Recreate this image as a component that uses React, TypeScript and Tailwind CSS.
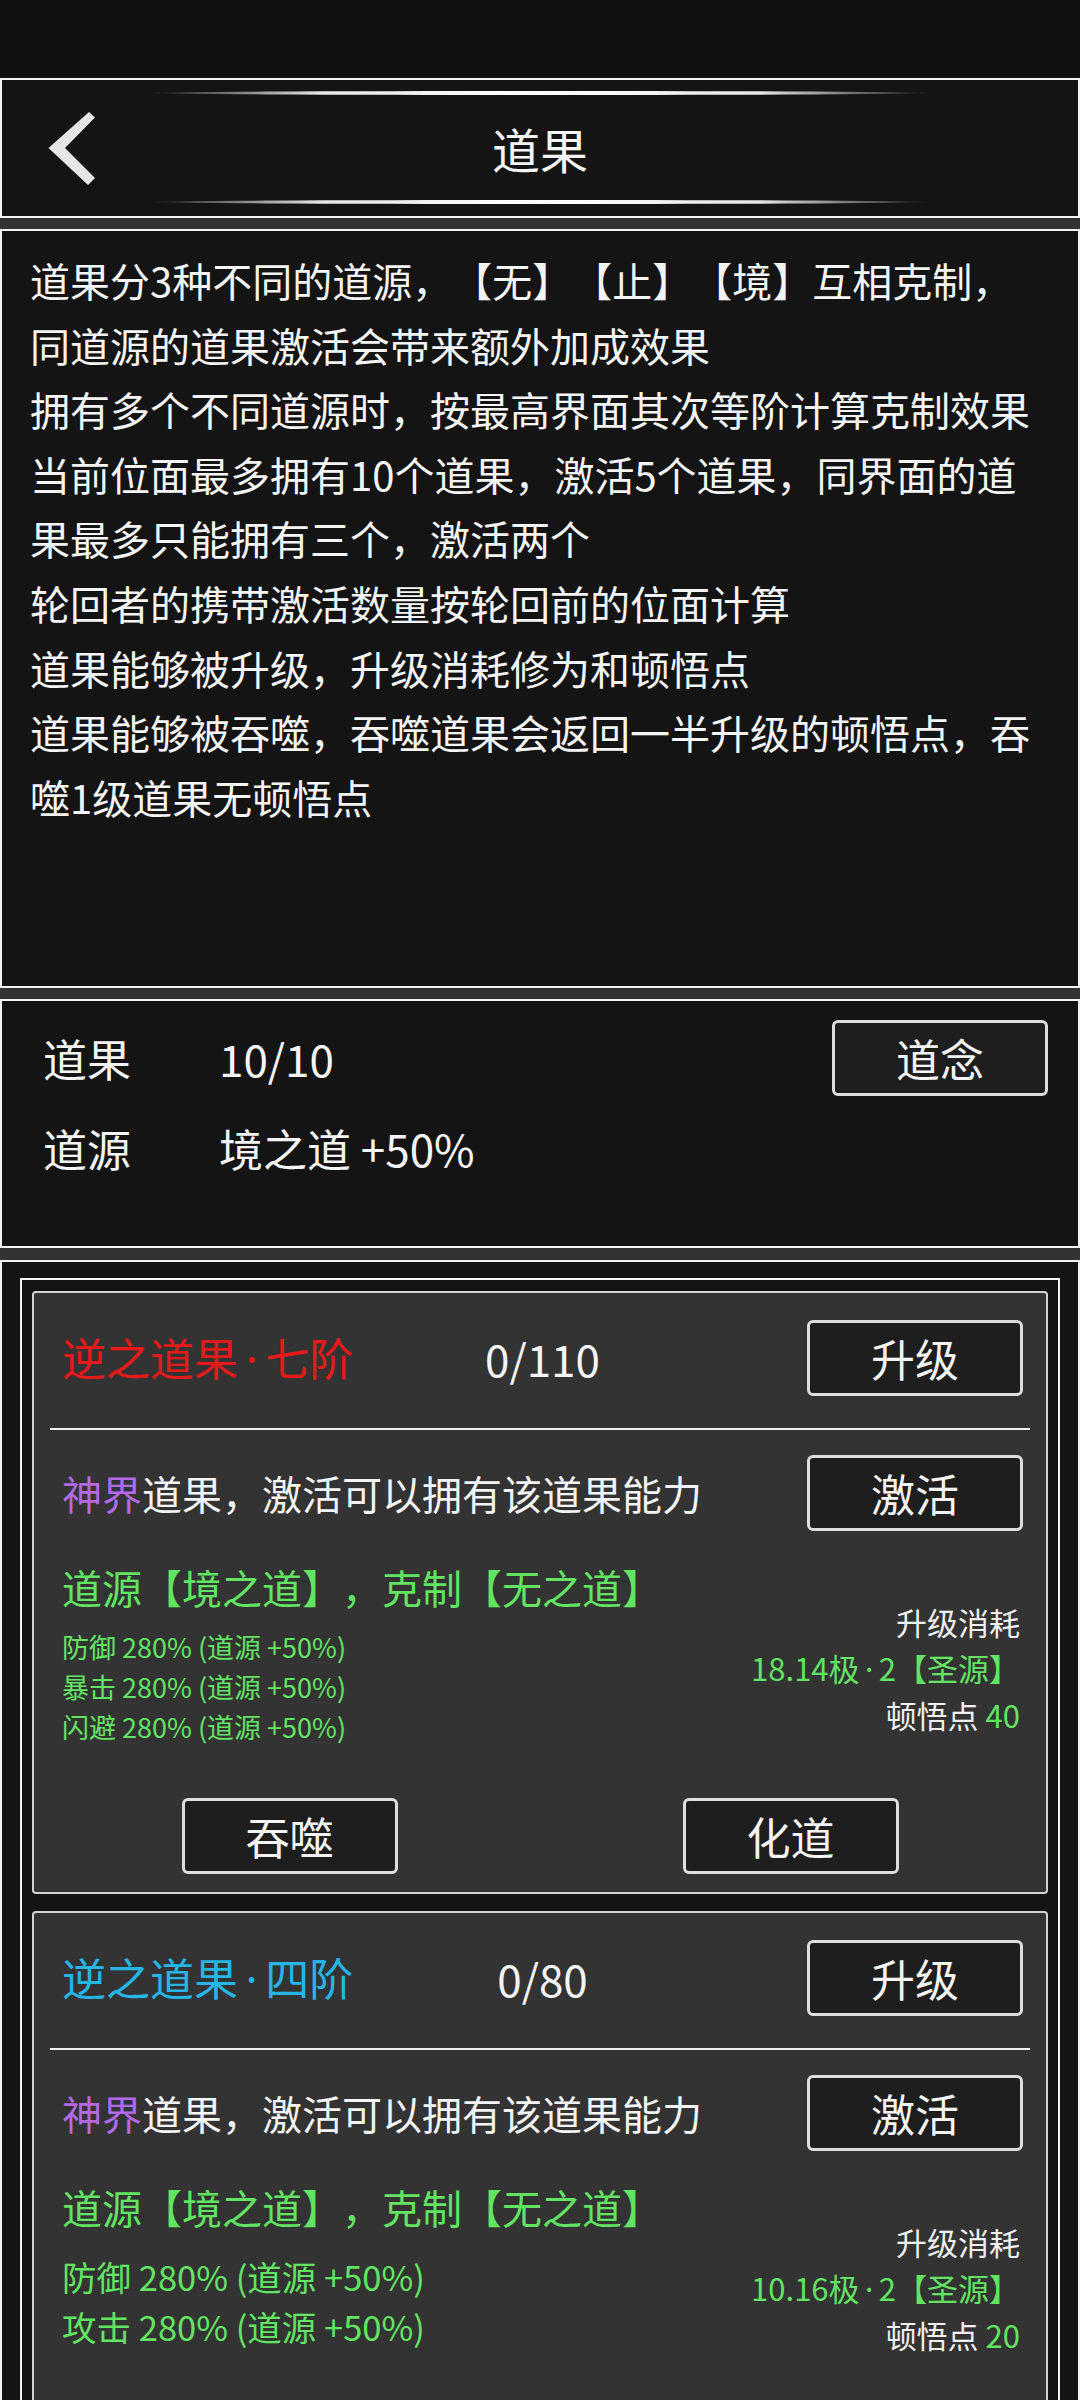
import React from "react"

function Btn({ children }: { children: React.ReactNode }) {
  return (
    <div className="flex h-[76px] w-[216px] shrink-0 items-center justify-center rounded-[6px] border-[3px] border-[#dedede] bg-[#1e1e1e] text-[44px] leading-none text-[#f4f4f4]">
      {children}
    </div>
  )
}

function Dot() {
  return <span className="inline-block w-[0.62em] text-center font-['Noto_Sans',sans-serif]">·</span>
}

function Glow() {
  return (
    <div className="mx-auto h-[4px] w-[780px] rounded-[50%] bg-[linear-gradient(90deg,rgba(255,255,255,0),rgba(255,255,255,0.9)_22%,#ffffff_50%,rgba(255,255,255,0.9)_78%,rgba(255,255,255,0))]" />
  )
}

type CardProps = {
  title: string
  rank: string
  titleClass: string
  count: string
  stats: string[]
  big?: boolean
  cost: string
  points: string
  actions?: boolean
}

function DaoCard({ title, rank, titleClass, count, stats, big, cost, points, actions = true }: CardProps) {
  return (
    <div className="shrink-0 rounded-[4px] border-2 border-[#d2d2d2] bg-[#333333] pt-[27px] pb-[18px]">
      <div className="grid grid-cols-[1fr_auto_1fr] items-center pl-[28px] pr-[23px]">
        <div className={`whitespace-nowrap text-[44px] leading-none ${titleClass}`}>
          {title}
          <Dot />
          {rank}
        </div>
        <div className="text-[44px] leading-none text-[#f4f4f4]">{count}</div>
        <div className="justify-self-end">
          <Btn>升级</Btn>
        </div>
      </div>

      <div className="mx-[16px] mt-[32px] h-[2px] bg-[#f0f0f0]" />

      <div className="mt-[25px] flex items-center justify-between pl-[28px] pr-[23px]">
        <div className="whitespace-nowrap text-[40px] leading-none text-[#f4f4f4]">
          <span className="text-[#b46ae6]">神界</span>道果，激活可以拥有该道果能力
        </div>
        <Btn>激活</Btn>
      </div>

      <div className="mt-[28px] flex items-start justify-between pl-[28px] pr-[26px]">
        <div className="text-[#62e462]">
          <div className="whitespace-nowrap text-[40px] leading-[56px]">道源【境之道】，克制【无之道】</div>
          <div
            className={
              big
                ? "mt-[16px] text-[34.5px] leading-[50px]"
                : "mt-[12px] text-[27px] leading-[40px]"
            }
          >
            {stats.map((s) => (
              <div key={s} className="whitespace-nowrap">
                {s}
              </div>
            ))}
          </div>
        </div>
        <div className="pt-[40px] text-right text-[31px] leading-[46px] text-[#f0f0f0]">
          <div>升级消耗</div>
          <div className="text-[#62e462]">
            {cost}
            <Dot />2【圣源】
          </div>
          <div>
            顿悟点 <span className="text-[#62e462]">{points}</span>
          </div>
        </div>
      </div>

      {actions ? (
        <div className="mt-[51px] flex justify-center gap-[285px]">
          <Btn>吞噬</Btn>
          <Btn>化道</Btn>
        </div>
      ) : (
        <div className="h-[127px]" />
      )}
    </div>
  )
}

const intro = [
  "道果分3种不同的道源，【无】【止】【境】互相克制，",
  "同道源的道果激活会带来额外加成效果",
  "拥有多个不同道源时，按最高界面其次等阶计算克制效果",
  "当前位面最多拥有10个道果，激活5个道果，同界面的道",
  "果最多只能拥有三个，激活两个",
  "轮回者的携带激活数量按轮回前的位面计算",
  "道果能够被升级，升级消耗修为和顿悟点",
  "道果能够被吞噬，吞噬道果会返回一半升级的顿悟点，吞",
  "噬1级道果无顿悟点",
]

export default function App() {
  return (
    <div className="flex h-[2400px] w-[1080px] flex-col overflow-hidden bg-[#333333] font-['Noto_Sans_CJK_SC','Noto_Sans',sans-serif] text-[#f4f4f4] [text-spacing-trim:space-all]">
      {/* status area */}
      <div className="h-[78px] shrink-0 bg-[#111111]" />

      {/* title bar */}
      <header className="flex h-[140px] shrink-0 flex-col border-2 border-[#f4f4f4] bg-[#141414] pt-[11px] pb-[12px]">
        <Glow />
        <div className="grid flex-1 grid-cols-[1fr_auto_1fr] items-center">
          <div className="pl-[45px]">
            <svg width="48" height="74" viewBox="45 111 48 74" fill="#e6e6e6">
              <polygon points="87,112 46.5,148 86,185 93,178 63,148 93,117.5" />
            </svg>
          </div>
          <h1 className="text-[48px] leading-none">道果</h1>
          <div />
        </div>
        <Glow />
      </header>

      <div className="h-[11px] shrink-0" />

      {/* description */}
      <section className="h-[759px] shrink-0 border-2 border-[#f4f4f4] bg-[#141414] pt-[17px] pl-[28px] text-[40px] leading-[64.6px]">
        {intro.map((line) => (
          <div key={line} className="whitespace-nowrap">
            {line}
          </div>
        ))}
      </section>

      <div className="h-[11px] shrink-0" />

      {/* summary */}
      <section className="flex h-[249px] shrink-0 flex-col gap-[14px] border-2 border-[#f4f4f4] bg-[#141414] pt-[19px] pl-[41px] pr-[30px] text-[44px] leading-none">
        <div className="flex h-[76px] items-center">
          <span className="w-[176px]">道果</span>
          <span className="flex-1">10/10</span>
          <Btn>道念</Btn>
        </div>
        <div className="flex h-[76px] items-center">
          <span className="w-[176px]">道源</span>
          <span>境之道 +50%</span>
        </div>
      </section>

      <div className="h-[12px] shrink-0" />

      {/* list */}
      <section className="flex flex-1 flex-col border-2 border-[#f4f4f4] bg-[#141414] px-[18px] pt-[16px] pb-[18px]">
        <div className="flex flex-1 flex-col gap-[17px] overflow-hidden border-2 border-[#f4f4f4] px-[10px] pt-[11px]">
          <DaoCard
            title="逆之道果"
            rank="七阶"
            titleClass="text-[#e61a1a]"
            count="0/110"
            stats={["防御 280% (道源 +50%)", "暴击 280% (道源 +50%)", "闪避 280% (道源 +50%)"]}
            cost="18.14极"
            points="40"
          />
          <DaoCard
            title="逆之道果"
            rank="四阶"
            titleClass="text-[#26b6e6]"
            count="0/80"
            stats={["防御 280% (道源 +50%)", "攻击 280% (道源 +50%)"]}
            big
            cost="10.16极"
            points="20"
            actions={false}
          />
        </div>
      </section>
    </div>
  )
}
